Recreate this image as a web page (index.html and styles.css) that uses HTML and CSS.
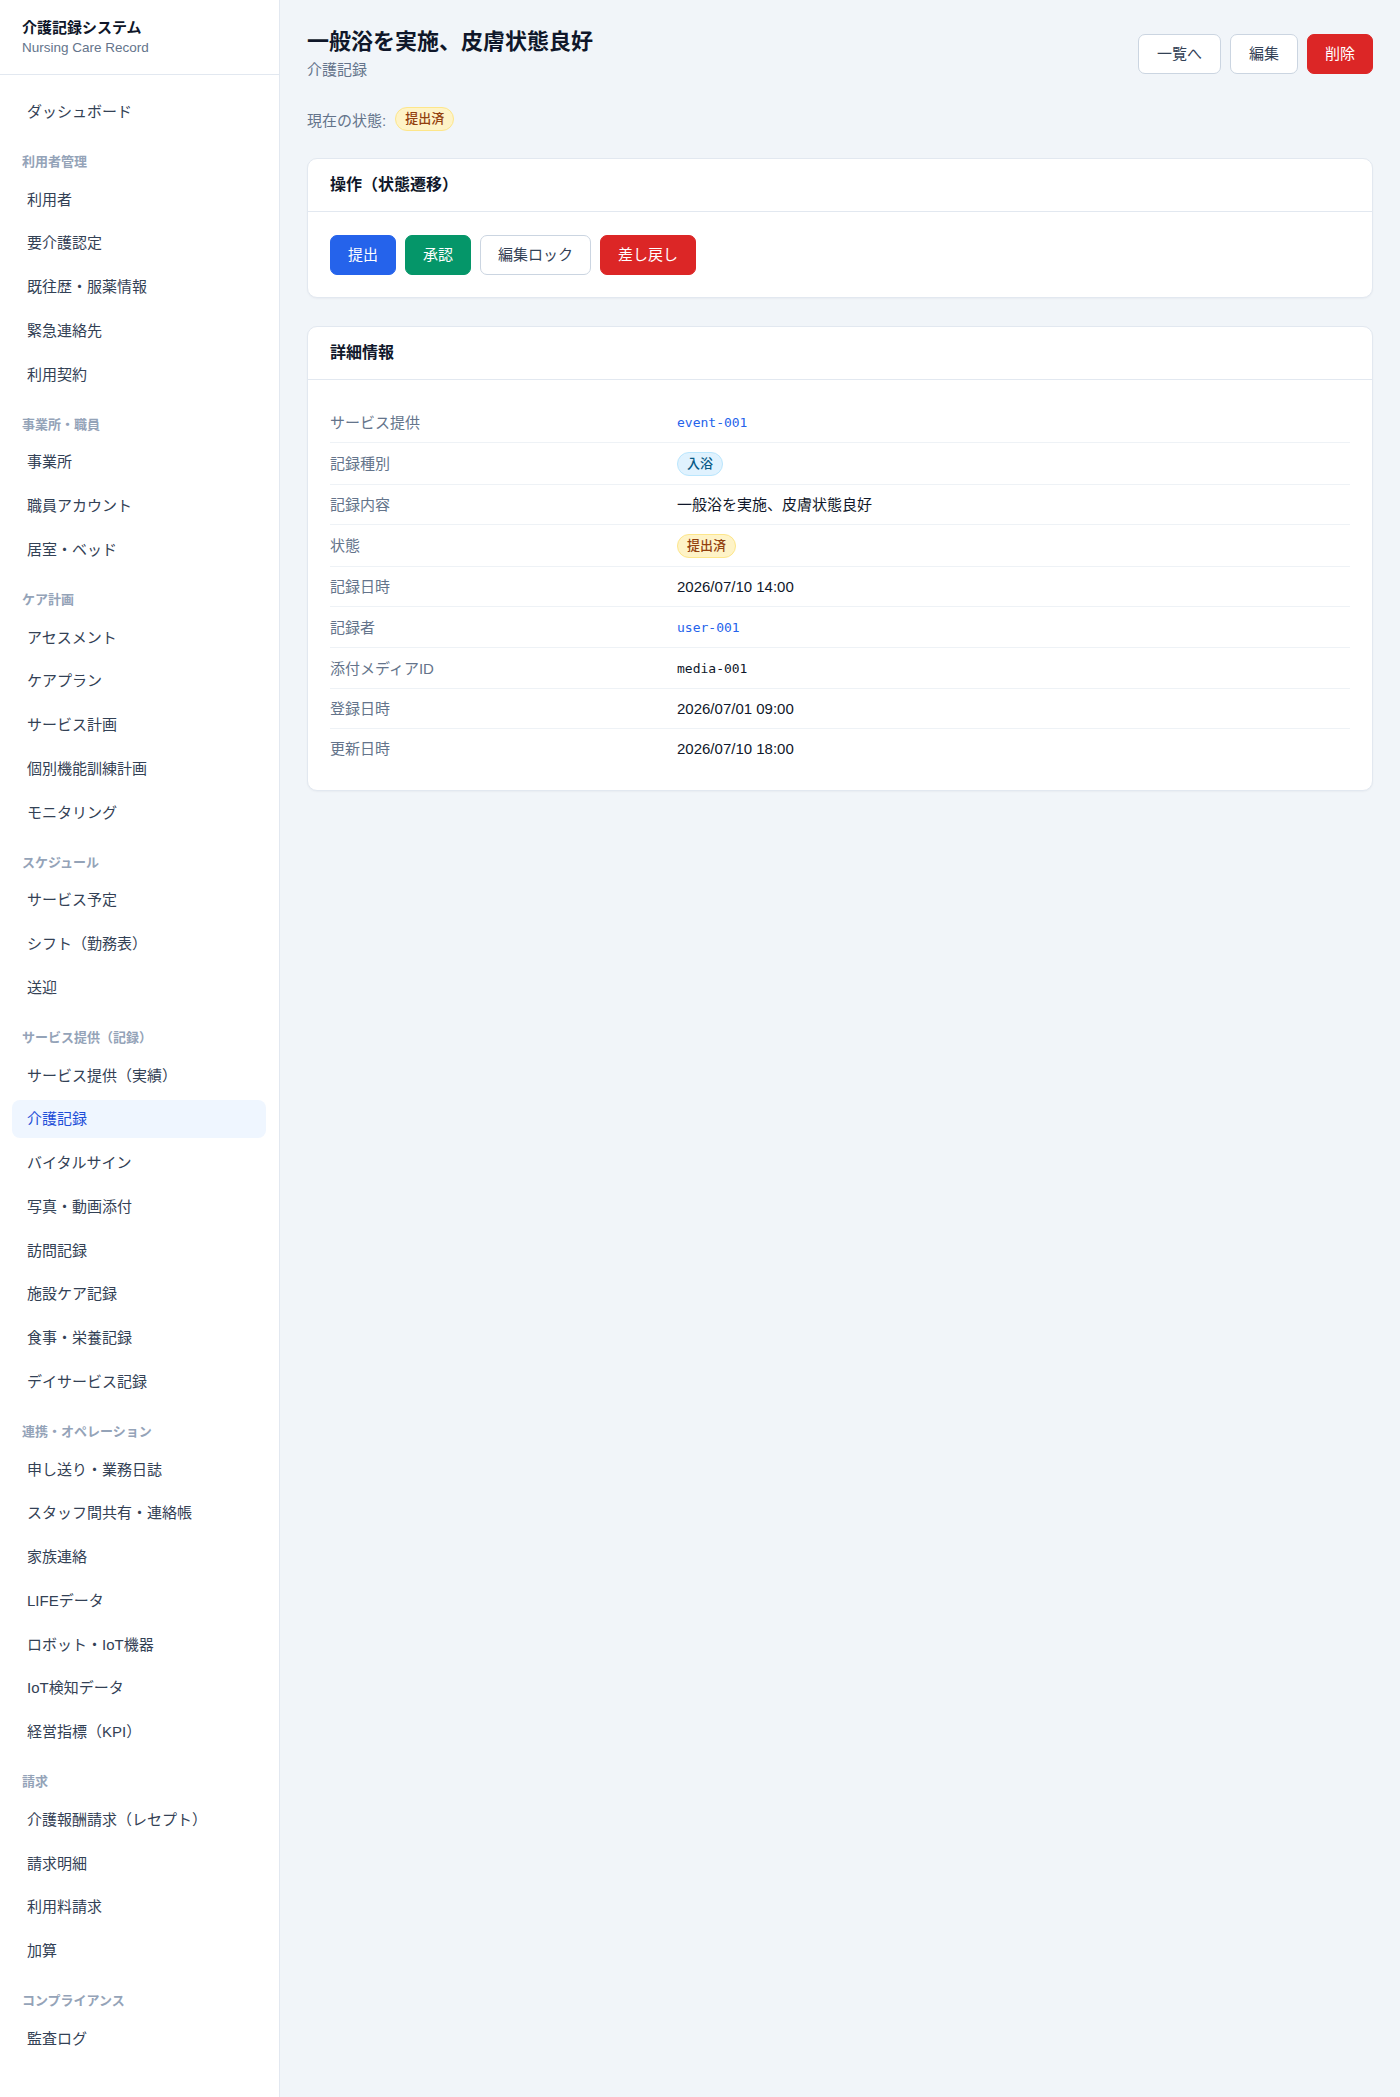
FILE: index.html
```html
<!DOCTYPE html>
<html lang="ja">
<head>
<meta charset="utf-8">
<title>介護記録 - 介護記録システム</title>
<link rel="stylesheet" href="styles.css">
</head>
<body>
<div class="layout">
  <aside class="sidebar">
    <div class="brand">
      <div class="brand-title">介護記録システム</div>
      <div class="brand-sub">Nursing Care Record</div>
    </div>
    <nav class="nav">
      <a class="nav-item">ダッシュボード</a>

      <div class="nav-label">利用者管理</div>
      <a class="nav-item">利用者</a>
      <a class="nav-item">要介護認定</a>
      <a class="nav-item">既往歴・服薬情報</a>
      <a class="nav-item">緊急連絡先</a>
      <a class="nav-item">利用契約</a>

      <div class="nav-label">事業所・職員</div>
      <a class="nav-item">事業所</a>
      <a class="nav-item">職員アカウント</a>
      <a class="nav-item">居室・ベッド</a>

      <div class="nav-label">ケア計画</div>
      <a class="nav-item">アセスメント</a>
      <a class="nav-item">ケアプラン</a>
      <a class="nav-item">サービス計画</a>
      <a class="nav-item">個別機能訓練計画</a>
      <a class="nav-item">モニタリング</a>

      <div class="nav-label">スケジュール</div>
      <a class="nav-item">サービス予定</a>
      <a class="nav-item">シフト（勤務表）</a>
      <a class="nav-item">送迎</a>

      <div class="nav-label">サービス提供（記録）</div>
      <a class="nav-item">サービス提供（実績）</a>
      <a class="nav-item active">介護記録</a>
      <a class="nav-item">バイタルサイン</a>
      <a class="nav-item">写真・動画添付</a>
      <a class="nav-item">訪問記録</a>
      <a class="nav-item">施設ケア記録</a>
      <a class="nav-item">食事・栄養記録</a>
      <a class="nav-item">デイサービス記録</a>

      <div class="nav-label">連携・オペレーション</div>
      <a class="nav-item">申し送り・業務日誌</a>
      <a class="nav-item">スタッフ間共有・連絡帳</a>
      <a class="nav-item">家族連絡</a>
      <a class="nav-item">LIFEデータ</a>
      <a class="nav-item">ロボット・IoT機器</a>
      <a class="nav-item">IoT検知データ</a>
      <a class="nav-item">経営指標（KPI）</a>

      <div class="nav-label">請求</div>
      <a class="nav-item">介護報酬請求（レセプト）</a>
      <a class="nav-item">請求明細</a>
      <a class="nav-item">利用料請求</a>
      <a class="nav-item">加算</a>

      <div class="nav-label">コンプライアンス</div>
      <a class="nav-item">監査ログ</a>
    </nav>
  </aside>

  <main class="main">
    <div class="page-head">
      <div>
        <h1 class="page-title">一般浴を実施、皮膚状態良好</h1>
        <div class="page-sub">介護記録</div>
      </div>
      <div class="head-actions">
        <button class="btn btn-outline">一覧へ</button>
        <button class="btn btn-outline">編集</button>
        <button class="btn btn-red">削除</button>
      </div>
    </div>

    <div class="status-line">
      <span>現在の状態:</span>
      <span class="badge badge-amber">提出済</span>
    </div>

    <section class="card card-ops">
      <div class="card-head">操作（状態遷移）</div>
      <div class="card-body ops-body">
        <button class="btn btn-blue">提出</button>
        <button class="btn btn-green">承認</button>
        <button class="btn btn-outline">編集ロック</button>
        <button class="btn btn-red">差し戻し</button>
      </div>
    </section>

    <section class="card card-detail">
      <div class="card-head">詳細情報</div>
      <div class="card-body">
        <div class="row"><div class="lbl">サービス提供</div><div class="val"><span class="mono link">event-001</span></div></div>
        <div class="row"><div class="lbl">記録種別</div><div class="val"><span class="badge badge-sky">入浴</span></div></div>
        <div class="row"><div class="lbl">記録内容</div><div class="val">一般浴を実施、皮膚状態良好</div></div>
        <div class="row"><div class="lbl">状態</div><div class="val"><span class="badge badge-amber">提出済</span></div></div>
        <div class="row"><div class="lbl">記録日時</div><div class="val">2026/07/10 14:00</div></div>
        <div class="row"><div class="lbl">記録者</div><div class="val"><span class="mono link">user-001</span></div></div>
        <div class="row"><div class="lbl">添付メディアID</div><div class="val"><span class="mono">media-001</span></div></div>
        <div class="row"><div class="lbl">登録日時</div><div class="val">2026/07/01 09:00</div></div>
        <div class="row"><div class="lbl">更新日時</div><div class="val">2026/07/10 18:00</div></div>
      </div>
    </section>
  </main>
</div>
</body>
</html>
```

FILE: styles.css
```css
* { box-sizing: border-box; }

html, body {
  margin: 0;
  padding: 0;
}

body {
  font-family: "Liberation Sans", "Noto Sans CJK JP", sans-serif;
  color: #0f172a;
  background: #f1f5f9;
  font-size: 15px;
}

.layout {
  display: flex;
  min-height: 100vh;
}

/* Sidebar */
.sidebar {
  width: 280px;
  flex: 0 0 280px;
  background: #ffffff;
  border-right: 1px solid #e2e8f0;
}

.brand {
  padding: 18px 22px 17px;
  border-bottom: 1px solid #e2e8f0;
}

.brand-title {
  font-size: 15px;
  font-weight: 700;
  line-height: 20px;
  color: #0f172a;
}

.brand-sub {
  font-size: 13.5px;
  line-height: 18px;
  color: #64748b;
  margin-top: 1px;
}

.nav {
  padding: 18px 13px 24px 12px;
  display: flex;
  flex-direction: column;
}

.nav-item {
  display: block;
  padding: 8px 15px;
  font-size: 15px;
  line-height: 21.75px;
  color: #334155;
  border-radius: 8px;
  margin-bottom: 6px;
  text-decoration: none;
}

.nav-item.active {
  background: #eff6ff;
  color: #1d4ed8;
}

.nav-label {
  font-size: 13px;
  font-weight: 700;
  line-height: 18px;
  color: #94a3b8;
  padding: 0 10px;
  margin: 16.2px 0 9.8px;
}

/* Main */
.main {
  flex: 1;
  padding: 28px 27px 40px;
}

.page-head {
  display: flex;
  justify-content: space-between;
  align-items: center;
}

.page-title {
  margin: 0;
  font-size: 22px;
  line-height: 28px;
  font-weight: 700;
  color: #0f172a;
}

.page-sub {
  margin-top: 3px;
  font-size: 15px;
  line-height: 22px;
  color: #64748b;
}

.head-actions {
  display: flex;
  gap: 9px;
  margin-top: -2px;
}

.btn {
  font-family: inherit;
  font-size: 15px;
  line-height: 22px;
  padding: 8px 17px;
  border: 1px solid transparent;
  border-radius: 7px;
  cursor: pointer;
  color: #ffffff;
  background: #ffffff;
}

.btn-outline {
  background: #ffffff;
  border-color: #cbd5e1;
  color: #334155;
}

.head-actions .btn-outline {
  padding: 8px 18px;
}

.head-actions .btn-red {
  padding: 8px 17px;
}

.btn-red {
  background: #dc2626;
  border-color: #dc2626;
  color: #ffffff;
}

.btn-blue {
  background: #2563eb;
  border-color: #2563eb;
  color: #ffffff;
}

.btn-green {
  background: #059669;
  border-color: #059669;
  color: #ffffff;
}

.status-line {
  margin-top: 26px;
  display: flex;
  align-items: center;
  gap: 9px;
  font-size: 15px;
  color: #64748b;
  height: 24px;
}

.badge {
  display: inline-block;
  font-size: 13px;
  font-weight: 500;
  line-height: 20px;
  padding: 1px 9px;
  border: 1px solid transparent;
  border-radius: 999px;
  vertical-align: middle;
}

.badge-amber {
  background: #fef3c7;
  border-color: #fde68a;
  color: #92400e;
}

.badge-sky {
  background: #e0f2fe;
  border-color: #bae6fd;
  color: #075985;
}

/* Cards */
.card {
  background: #ffffff;
  border: 1px solid #e2e8f0;
  border-radius: 10px;
  box-shadow: 0 1px 2px rgba(15, 23, 42, 0.04);
}

.card-ops {
  margin-top: 27px;
}

.card-detail {
  margin-top: 28px;
}

.card-head {
  padding: 14px 22px;
  font-size: 16px;
  line-height: 24px;
  font-weight: 700;
  color: #0f172a;
  border-bottom: 1px solid #e2e8f0;
}

.card-body {
  padding: 22px;
}

.ops-body {
  padding: 23px 22px 22px;
  display: flex;
  gap: 9px;
}

.row {
  display: grid;
  grid-template-columns: 347px 1fr;
  padding: 9px 0 8px;
  border-bottom: 1px solid #eef2f6;
  line-height: 22px;
  align-items: center;
}

.row:last-child {
  border-bottom: none;
}

.lbl {
  font-size: 15px;
  color: #64748b;
}

.val {
  font-size: 15px;
  color: #0f172a;
}

.mono {
  font-family: "DejaVu Sans Mono", "Liberation Mono", monospace;
  font-size: 13px;
}

.link {
  color: #2563eb;
}
```
